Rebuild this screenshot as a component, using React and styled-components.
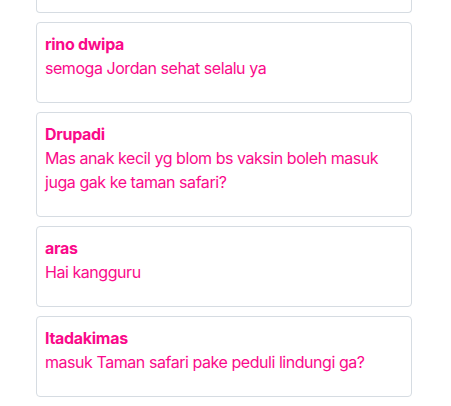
import React from 'react';
import styled, { createGlobalStyle } from 'styled-components';

const GlobalStyle = createGlobalStyle`
  html, body {
    margin: 0;
    padding: 0;
    background: #ffffff;
    overflow: hidden;
  }
`;

const Page = styled.div`
  font-family: Inter, 'Noto Sans', 'Liberation Sans', sans-serif;
  padding-left: 36px;
  width: 376px;
`;

const CommentList = styled.ul`
  list-style: none;
  margin: 0;
  padding: 0;
  display: flex;
  flex-direction: column;
  gap: 9px;
`;

const CommentCard = styled.li`
  border: 1px solid #d6dce2;
  border-radius: 4px;
  padding: 9px 8px 22px;
  color: #fa0a8a;
  font-size: 16px;
  line-height: 24px;
  letter-spacing: -0.45px;
`;

// the list is scrolled, only the bottom edge of the previous card shows
const ClippedCard = styled(CommentCard)`
  height: 13px;
  padding: 0;
  box-sizing: border-box;
  border-top: none;
  border-radius: 0 0 4px 4px;
`;

const Author = styled.div`
  font-weight: 700;
  letter-spacing: -0.3px;
`;

const Message = styled.p`
  margin: 0;
  font-weight: 400;
`;

const comments = [
  { name: 'rino dwipa', text: 'semoga Jordan sehat selalu ya' },
  { name: 'Drupadi', text: 'Mas anak kecil yg blom bs vaksin boleh masuk juga gak ke taman safari?' },
  { name: 'aras', text: 'Hai kangguru' },
  { name: 'Itadakimas', text: 'masuk Taman safari pake peduli lindungi ga?' },
];

const App = () => (
  <Page>
    <GlobalStyle />
    <CommentList>
      <ClippedCard aria-hidden="true" />
      {comments.map((c) => (
        <CommentCard key={c.name}>
          <Author>{c.name}</Author>
          <Message>{c.text}</Message>
        </CommentCard>
      ))}
    </CommentList>
  </Page>
);

export default App;
